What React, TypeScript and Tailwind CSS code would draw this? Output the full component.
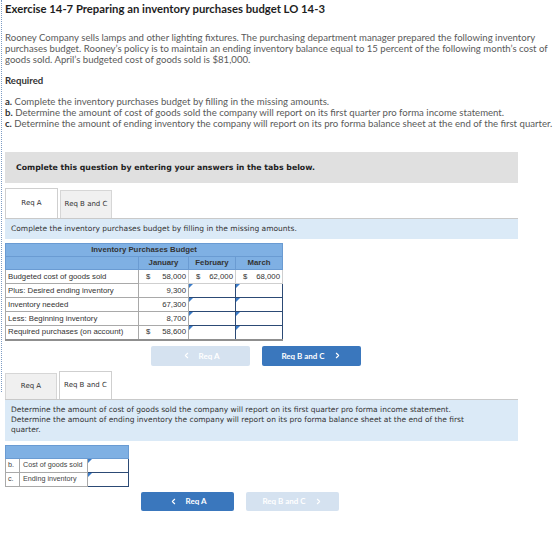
import { ChevronLeft, ChevronRight } from "lucide-react"

const verdana = "font-['DejaVu_Sans',Verdana,sans-serif]"
const arial = "font-['Liberation_Sans',Arial,sans-serif]"

function Tabs({ active, height }: { active: number; height: string }) {
  const tabs = ["Req A", "Req B and C"]
  return (
    <div className={`flex items-end gap-[2px] ${height}`}>
      {tabs.map((t, i) => (
        <div
          key={t}
          className={
            i === active
              ? `flex h-full w-[53px] items-center justify-center border border-b-0 border-[#cfcfcf] bg-white text-[7px] text-[#333] ${verdana}`
              : `flex h-[calc(100%-2px)] w-[52px] items-center justify-center border border-b-0 border-[#d6d6d6] bg-[#f0f0f0] text-[7px] text-[#333] ${verdana}`
          }
        >
          {t}
        </div>
      ))}
    </div>
  )
}

function Flag() {
  return (
    <span className="absolute left-0 top-0 h-0 w-0 border-r-[4px] border-t-[4px] border-r-transparent border-t-[#3b7cc9]" />
  )
}

function InputCell() {
  return (
    <td className="relative h-[14px] border border-[#2c4a75] bg-white p-0">
      <Flag />
    </td>
  )
}

function NavButtons({ back, offset, width, height }: { back: boolean; offset: string; width: string; height: string }) {
  const on = "bg-[#3a77bd] text-white"
  const off = "bg-[#d5e2f0] text-white"
  return (
    <div className={`flex gap-[12px] ${offset}`}>
      <button className={`flex items-center justify-center gap-[8px] rounded-[2px] text-[8px] font-bold ${width} ${height} ${back ? on : off}`}>
        <ChevronLeft size={9} strokeWidth={3} />
        Req A
      </button>
      <button className={`flex items-center justify-center gap-[8px] rounded-[2px] text-[8px] font-bold ${width} ${height} ${back ? off : on}`}>
        Req B and C
        <ChevronRight size={9} strokeWidth={3} />
      </button>
    </div>
  )
}

export default function App() {
  const rows = [
    { label: "Plus: Desired ending inventory", jan: "9,300", sign: false },
    { label: "Inventory needed", jan: "67,300", sign: false },
    { label: "Less: Beginning inventory", jan: "8,700", sign: false },
    { label: "Required purchases (on account)", jan: "58,600", sign: true },
  ]

  return (
    <div className="relative h-[541px] w-[560px] overflow-hidden bg-white pl-[5px] font-['Lato',sans-serif]">
      <span className="absolute left-[1px] top-0 h-[392px] border-l border-dotted border-[#7d9cc4]" />

      <h1 className="pt-[2px] text-[11.3px] font-bold leading-[14px] text-[#1e1e1e]">
        Exercise 14-7 Preparing an inventory purchases budget LO 14-3
      </h1>

      <p className="mt-[16px] w-[554px] whitespace-nowrap text-[9.6px] leading-[11px] text-[#5a5a5a]">
        Rooney Company sells lamps and other lighting fixtures. The purchasing department manager prepared the following inventory
        <br />
        purchases budget. Rooney’s policy is to maintain an ending inventory balance equal to 15 percent of the following month’s cost of
        <br />
        goods sold. April’s budgeted cost of goods sold is $81,000.
      </p>

      <h2 className="mt-[10px] text-[9.6px] font-bold leading-[11px] text-[#333]">Required</h2>

      <ul className="mt-[10px] whitespace-nowrap text-[9.6px] leading-[11px] text-[#5a5a5a]">
        <li><b className="text-[#333]">a.</b> Complete the inventory purchases budget by filling in the missing amounts.</li>
        <li><b className="text-[#333]">b.</b> Determine the amount of cost of goods sold the company will report on its first quarter pro forma income statement.</li>
        <li><b className="text-[#333]">c.</b> Determine the amount of ending inventory the company will report on its pro forma balance sheet at the end of the first quarter.</li>
      </ul>

      <div className={`mt-[23px] flex h-[31px] w-[513px] items-center bg-[#e0e0e0] pl-[11px] text-[7.8px] font-bold text-[#222] ${verdana}`}>
        Complete this question by entering your answers in the tabs below.
      </div>

      {/* Req A */}
      <div className="mt-[5px]">
        <Tabs active={0} height="h-[30px]" />
      </div>
      <div className={`flex h-[21px] w-[513px] items-center border-t border-[#c9c9c9] bg-[#dbeaf7] pl-[6px] text-[7.5px] text-[#333] ${verdana}`}>
        Complete the inventory purchases budget by filling in the missing amounts.
      </div>

      <table className={`mt-[4px] w-[277px] table-fixed border-collapse border-b-2 border-b-[#8f8f8f] text-[7.8px] text-[#333] ${arial}`}>
        <colgroup>
          <col className="w-[133px]" />
          <col className="w-[50px]" />
          <col className="w-[47px]" />
          <col className="w-[47px]" />
        </colgroup>
        <thead>
          <tr className="h-[13px] bg-[#7fb0e3]">
            <th colSpan={4} className="border border-[#6a9bd2] p-0 text-center font-bold leading-[12px]">
              Inventory Purchases Budget
            </th>
          </tr>
          <tr className="h-[13px] bg-[#7fb0e3]">
            <th className="border border-[#6a9bd2] p-0" />
            <th className="border border-[#6a9bd2] p-0 text-center font-bold">January</th>
            <th className="border border-[#6a9bd2] p-0 text-center font-bold">February</th>
            <th className="border border-[#6a9bd2] p-0 text-center font-bold">March</th>
          </tr>
        </thead>
        <tbody>
          <tr className="h-[14px]">
            <td className="whitespace-nowrap border border-[#a9a9a9] px-[2px] py-0">Budgeted cost of goods sold</td>
            {["58,000", "62,000", "68,000"].map((v) => (
              <td key={v} className="border border-[#cfcfcf] px-[2px] py-0">
                <div className="flex justify-between pl-[5px]">
                  <span>$</span>
                  <span>{v}</span>
                </div>
              </td>
            ))}
          </tr>
          {rows.map((r) => (
            <tr key={r.label} className="h-[14px]">
              <td className="whitespace-nowrap border border-[#a9a9a9] px-[2px] py-0">{r.label}</td>
              <td className="border border-[#a9a9a9] px-[2px] py-0">
                <div className="flex justify-between pl-[5px]">
                  <span>{r.sign ? "$" : ""}</span>
                  <span>{r.jan}</span>
                </div>
              </td>
              <InputCell />
              <InputCell />
            </tr>
          ))}
        </tbody>
      </table>

      <NavButtons back={false} offset="mt-[5px] ml-[146px]" width="w-[99px]" height="h-[20px]" />

      {/* Req B and C */}
      <div className="mt-[5px]">
        <Tabs active={1} height="h-[28px]" />
      </div>
      <div className={`h-[42px] w-[513px] whitespace-nowrap border-t border-[#c9c9c9] bg-[#dbeaf7] pl-[6px] pt-[5px] text-[7.5px] leading-[10px] text-[#333] ${verdana}`}>
        Determine the amount of cost of goods sold the company will report on its first quarter pro forma income statement.
        <br />
        Determine the amount of ending inventory the company will report on its pro forma balance sheet at the end of the first
        <br />
        quarter.
      </div>

      <table className={`mt-[4px] w-[123px] table-fixed border-collapse text-[7.2px] text-[#444] ${arial}`}>
        <colgroup>
          <col className="w-[14px]" />
          <col className="w-[68px]" />
          <col className="w-[41px]" />
        </colgroup>
        <thead>
          <tr className="h-[13px] bg-[#7fb0e3]">
            <th colSpan={3} className="border border-[#6a9bd2] p-0" />
          </tr>
        </thead>
        <tbody>
          <tr className="h-[14px]">
            <td className="border border-[#a9a9a9] px-[2px] py-0">b.</td>
            <td className="whitespace-nowrap border border-[#a9a9a9] px-[3px] py-0">Cost of goods sold</td>
            <InputCell />
          </tr>
          <tr className="h-[14px]">
            <td className="border border-[#a9a9a9] px-[2px] py-0">c.</td>
            <td className="whitespace-nowrap border border-[#a9a9a9] px-[3px] py-0">Ending inventory</td>
            <InputCell />
          </tr>
        </tbody>
      </table>

      <NavButtons back={true} offset="mt-[5px] ml-[136px]" width="w-[93px]" height="h-[19px]" />
    </div>
  )
}
